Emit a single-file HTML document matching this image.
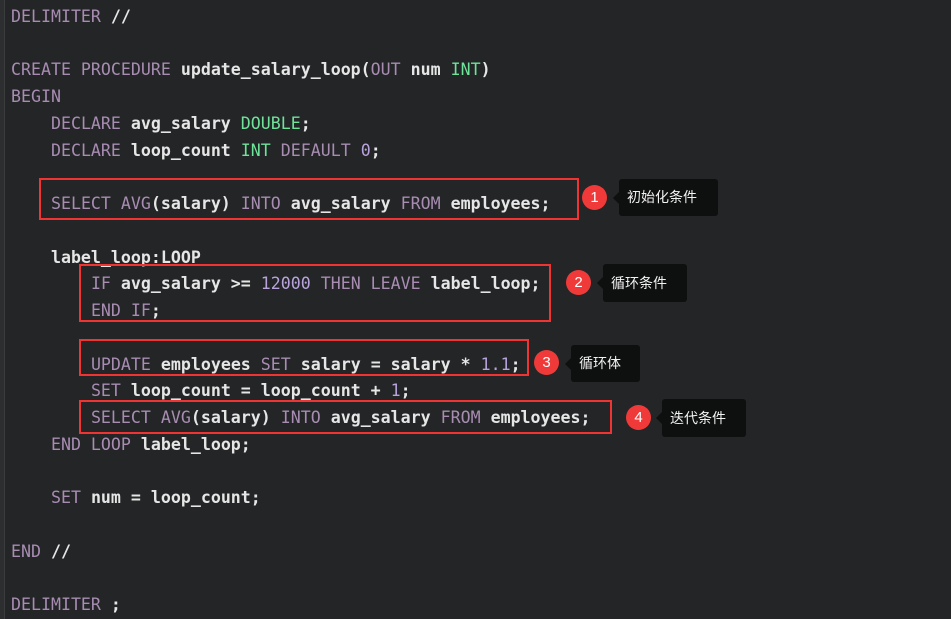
<!DOCTYPE html>
<html><head><meta charset="utf-8"><style>
html,body{margin:0;padding:0;}
body{width:951px;height:619px;background:#232526;position:relative;overflow:hidden;font-family:"DejaVu Sans Mono","Liberation Mono",monospace;}
.bl{position:absolute;left:0;top:0;width:4px;height:619px;background:#2c2e2f;border-right:1px solid #3a3c3d;}
.code{position:absolute;left:11px;top:4px;font-size:16.6px;line-height:26.73px;white-space:pre;color:#e6e6e6;font-weight:bold;}
.k{color:#a88cb2;font-weight:normal}.g{color:#6fe39a;font-weight:normal}.n{color:#b8a3dc;font-weight:normal}
.box{position:absolute;border:2px solid #f03434;box-sizing:border-box;}
.c{position:absolute;width:25px;height:25px;border-radius:50%;background:#f03a3a;color:#fff;font:15px "Liberation Sans",sans-serif;text-align:center;line-height:25px;}
.t{position:absolute;background:#0e0f0f;color:#f2f2f2;border-radius:3px;font:14px "Liberation Sans","Noto Sans CJK SC",sans-serif;box-sizing:border-box;padding-left:8px;}
.t:before{content:"";position:absolute;left:-6px;top:50%;margin-top:-6px;border:6px solid transparent;border-left:0;border-right-color:#0e0f0f;}
</style></head><body>
<div class="bl"></div>
<div class="code"><span class="k">DELIMITER</span> //

<span class="k">CREATE PROCEDURE</span> update_salary_loop(<span class="k">OUT</span> num <span class="g">INT</span>)
<span class="k">BEGIN</span>
    <span class="k">DECLARE</span> avg_salary <span class="g">DOUBLE</span>;
    <span class="k">DECLARE</span> loop_count <span class="g">INT</span> <span class="k">DEFAULT</span> <span class="n">0</span>;

    <span class="k">SELECT AVG</span>(salary) <span class="k">INTO</span> avg_salary <span class="k">FROM</span> employees;

    label_loop:LOOP
        <span class="k">IF</span> avg_salary &gt;= <span class="n">12000</span> <span class="k">THEN LEAVE</span> label_loop;
        <span class="k">END IF</span>;

        <span class="k">UPDATE</span> employees <span class="k">SET</span> salary = salary * <span class="n">1.1</span>;
        <span class="k">SET</span> loop_count = loop_count + <span class="n">1</span>;
        <span class="k">SELECT AVG</span>(salary) <span class="k">INTO</span> avg_salary <span class="k">FROM</span> employees;
    <span class="k">END LOOP</span> label_loop;

    <span class="k">SET</span> num = loop_count;

<span class="k">END</span> //

<span class="k">DELIMITER</span> ;</div>
<div class="box" style="left:39px;top:178px;width:540px;height:42px"></div>
<div class="box" style="left:79px;top:264px;width:472px;height:58px"></div>
<div class="box" style="left:79px;top:339px;width:450px;height:37px"></div>
<div class="box" style="left:79px;top:400px;width:533px;height:34px"></div>
<div class="c" style="left:582px;top:185px">1</div>
<div class="c" style="left:566px;top:270px">2</div>
<div class="c" style="left:534px;top:350px">3</div>
<div class="c" style="left:626px;top:405px">4</div>
<div class="t" style="left:619px;top:179px;width:99px;height:37px;line-height:37px">初始化条件</div>
<div class="t" style="left:603px;top:264px;width:84px;height:38px;line-height:38px">循环条件</div>
<div class="t" style="left:571px;top:345px;width:69px;height:37px;line-height:37px">循环体</div>
<div class="t" style="left:662px;top:399px;width:84px;height:38px;line-height:38px">迭代条件</div>
</body></html>
